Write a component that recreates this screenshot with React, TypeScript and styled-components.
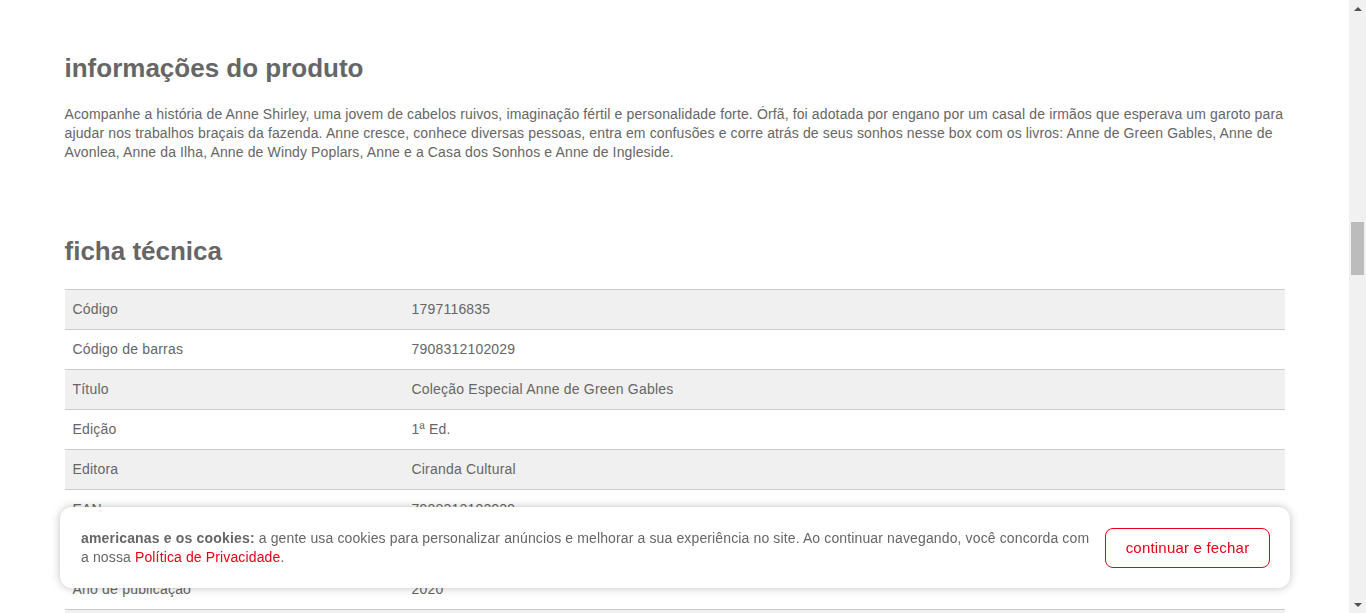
import React from "react";
import styled, { createGlobalStyle } from "styled-components";

const Global = createGlobalStyle`
  html, body { margin: 0; padding: 0; background: #fff; overflow: hidden; }
  * { box-sizing: border-box; }
`;

const Viewport = styled.div`
  display: flex;
  width: 1366px;
  height: 613px;
  overflow: hidden;
  font-family: "Liberation Sans", Arial, sans-serif;
  color: #666;
`;

const Page = styled.div`
  flex: 1;
  min-width: 0;
  display: flex;
  justify-content: center;
`;

const Content = styled.main`
  width: 1220px;
  padding-top: 51px;
`;

const Heading = styled.h2`
  margin: 0;
  font-size: 26px;
  line-height: 34px;
  font-weight: 700;
  color: #666;
`;

const Description = styled.p`
  margin: 20px 0 0;
  font-size: 14px;
  line-height: 19px;
  letter-spacing: 0.13px;
  color: #666;
`;

const Section = styled.section<{ $gap: number }>`
  margin-top: ${(p) => p.$gap}px;
`;

const Table = styled.table`
  width: 100%;
  margin-top: 21px;
  border-collapse: collapse;
  font-size: 14px;
  letter-spacing: 0.2px;
  color: #666;
`;

const Row = styled.tr<{ $shaded: boolean }>`
  height: 40px;
  background: ${(p) => (p.$shaded ? "#f0f0f0" : "#fff")};
  border-top: 1px solid #ccc;
  border-bottom: 1px solid #ccc;
`;

const Cell = styled.td<{ $label?: boolean }>`
  padding: 0 8px 1px;
  width: ${(p) => (p.$label ? "339px" : "auto")};
  vertical-align: middle;
`;

const ScrollTrack = styled.div`
  position: relative;
  width: 17px;
  height: 613px;
  background: #f1f1f1;
  flex-shrink: 0;
`;

const Arrow = styled.div<{ $down?: boolean }>`
  position: absolute;
  left: 5px;
  ${(p) => (p.$down ? "bottom: 6px;" : "top: 7px;")}
  width: 0;
  height: 0;
  border-left: 4px solid transparent;
  border-right: 4px solid transparent;
  ${(p) => (p.$down ? "border-top: 4px solid #505050;" : "border-bottom: 4px solid #505050;")}
`;

const Thumb = styled.div`
  position: absolute;
  left: 2px;
  top: 222px;
  width: 13px;
  height: 53px;
  background: #bcbcbc;
`;

const Banner = styled.div`
  position: fixed;
  left: 60px;
  bottom: 25px;
  width: 1230px;
  height: 81px;
  background: #fff;
  border-radius: 12px;
  box-shadow: 0 0 8px rgba(0, 0, 0, 0.25);
  display: flex;
  align-items: center;
  gap: 14px;
  padding: 0 20px 0 21px;
  font-family: "Liberation Sans", Arial, sans-serif;
`;

const BannerText = styled.p`
  flex: 1;
  margin: 0;
  font-size: 14px;
  line-height: 19px;
  color: #666;
  letter-spacing: 0.13px;
`;

const Brand = styled.strong`
  font-weight: 700;
  letter-spacing: 0.17px;
  color: #666;
`;

const PolicyLink = styled.a`
  color: #e60014;
  text-decoration: none;
`;

const CloseButton = styled.button`
  width: 165px;
  height: 40px;
  border: 1px solid #e60014;
  border-radius: 8px;
  background: #fff;
  color: #e60014;
  font-family: "Liberation Sans", Arial, sans-serif;
  font-size: 15px;
  letter-spacing: 0.2px;
  flex-shrink: 0;
  cursor: pointer;
`;

const specs: [string, string][] = [
  ["Código", "1797116835"],
  ["Código de barras", "7908312102029"],
  ["Título", "Coleção Especial Anne de Green Gables"],
  ["Edição", "1ª Ed."],
  ["Editora", "Ciranda Cultural"],
  ["EAN", "7908312102029"],
  ["ISBN", "9786555002154"],
  ["Ano de publicação", "2020"],
  ["Idioma", "Português"],
];

export default function App() {
  return (
    <>
      <Global />
      <Viewport>
        <Page>
          <Content>
            <Heading>informações do produto</Heading>
            <Description>
              Acompanhe a história de Anne Shirley, uma jovem de cabelos ruivos, imaginação fértil e personalidade forte.
              Órfã, foi adotada por engano por um casal de irmãos que esperava um garoto para ajudar nos trabalhos braçais
              da fazenda. Anne cresce, conhece diversas pessoas, entra em confusões e corre atrás de seus sonhos nesse box
              com os livros: Anne de Green Gables, Anne de Avonlea, Anne da Ilha, Anne de Windy Poplars, Anne e a Casa dos
              Sonhos e Anne de Ingleside.
            </Description>
            <Section $gap={72}>
              <Heading>ficha técnica</Heading>
              <Table>
                <tbody>
                  {specs.map(([k, v], i) => (
                    <Row key={k} $shaded={i % 2 === 0}>
                      <Cell $label>{k}</Cell>
                      <Cell>{v}</Cell>
                    </Row>
                  ))}
                </tbody>
              </Table>
            </Section>
          </Content>
        </Page>
        <ScrollTrack>
          <Arrow />
          <Thumb />
          <Arrow $down />
        </ScrollTrack>
      </Viewport>
      <Banner>
        <BannerText>
          <Brand>americanas e os cookies:</Brand> a gente usa cookies para personalizar anúncios e melhorar a sua
          experiência no site. Ao continuar navegando, você concorda com a nossa{" "}
          <PolicyLink href="#">Política de Privacidade</PolicyLink>.
        </BannerText>
        <CloseButton>continuar e fechar</CloseButton>
      </Banner>
    </>
  );
}
